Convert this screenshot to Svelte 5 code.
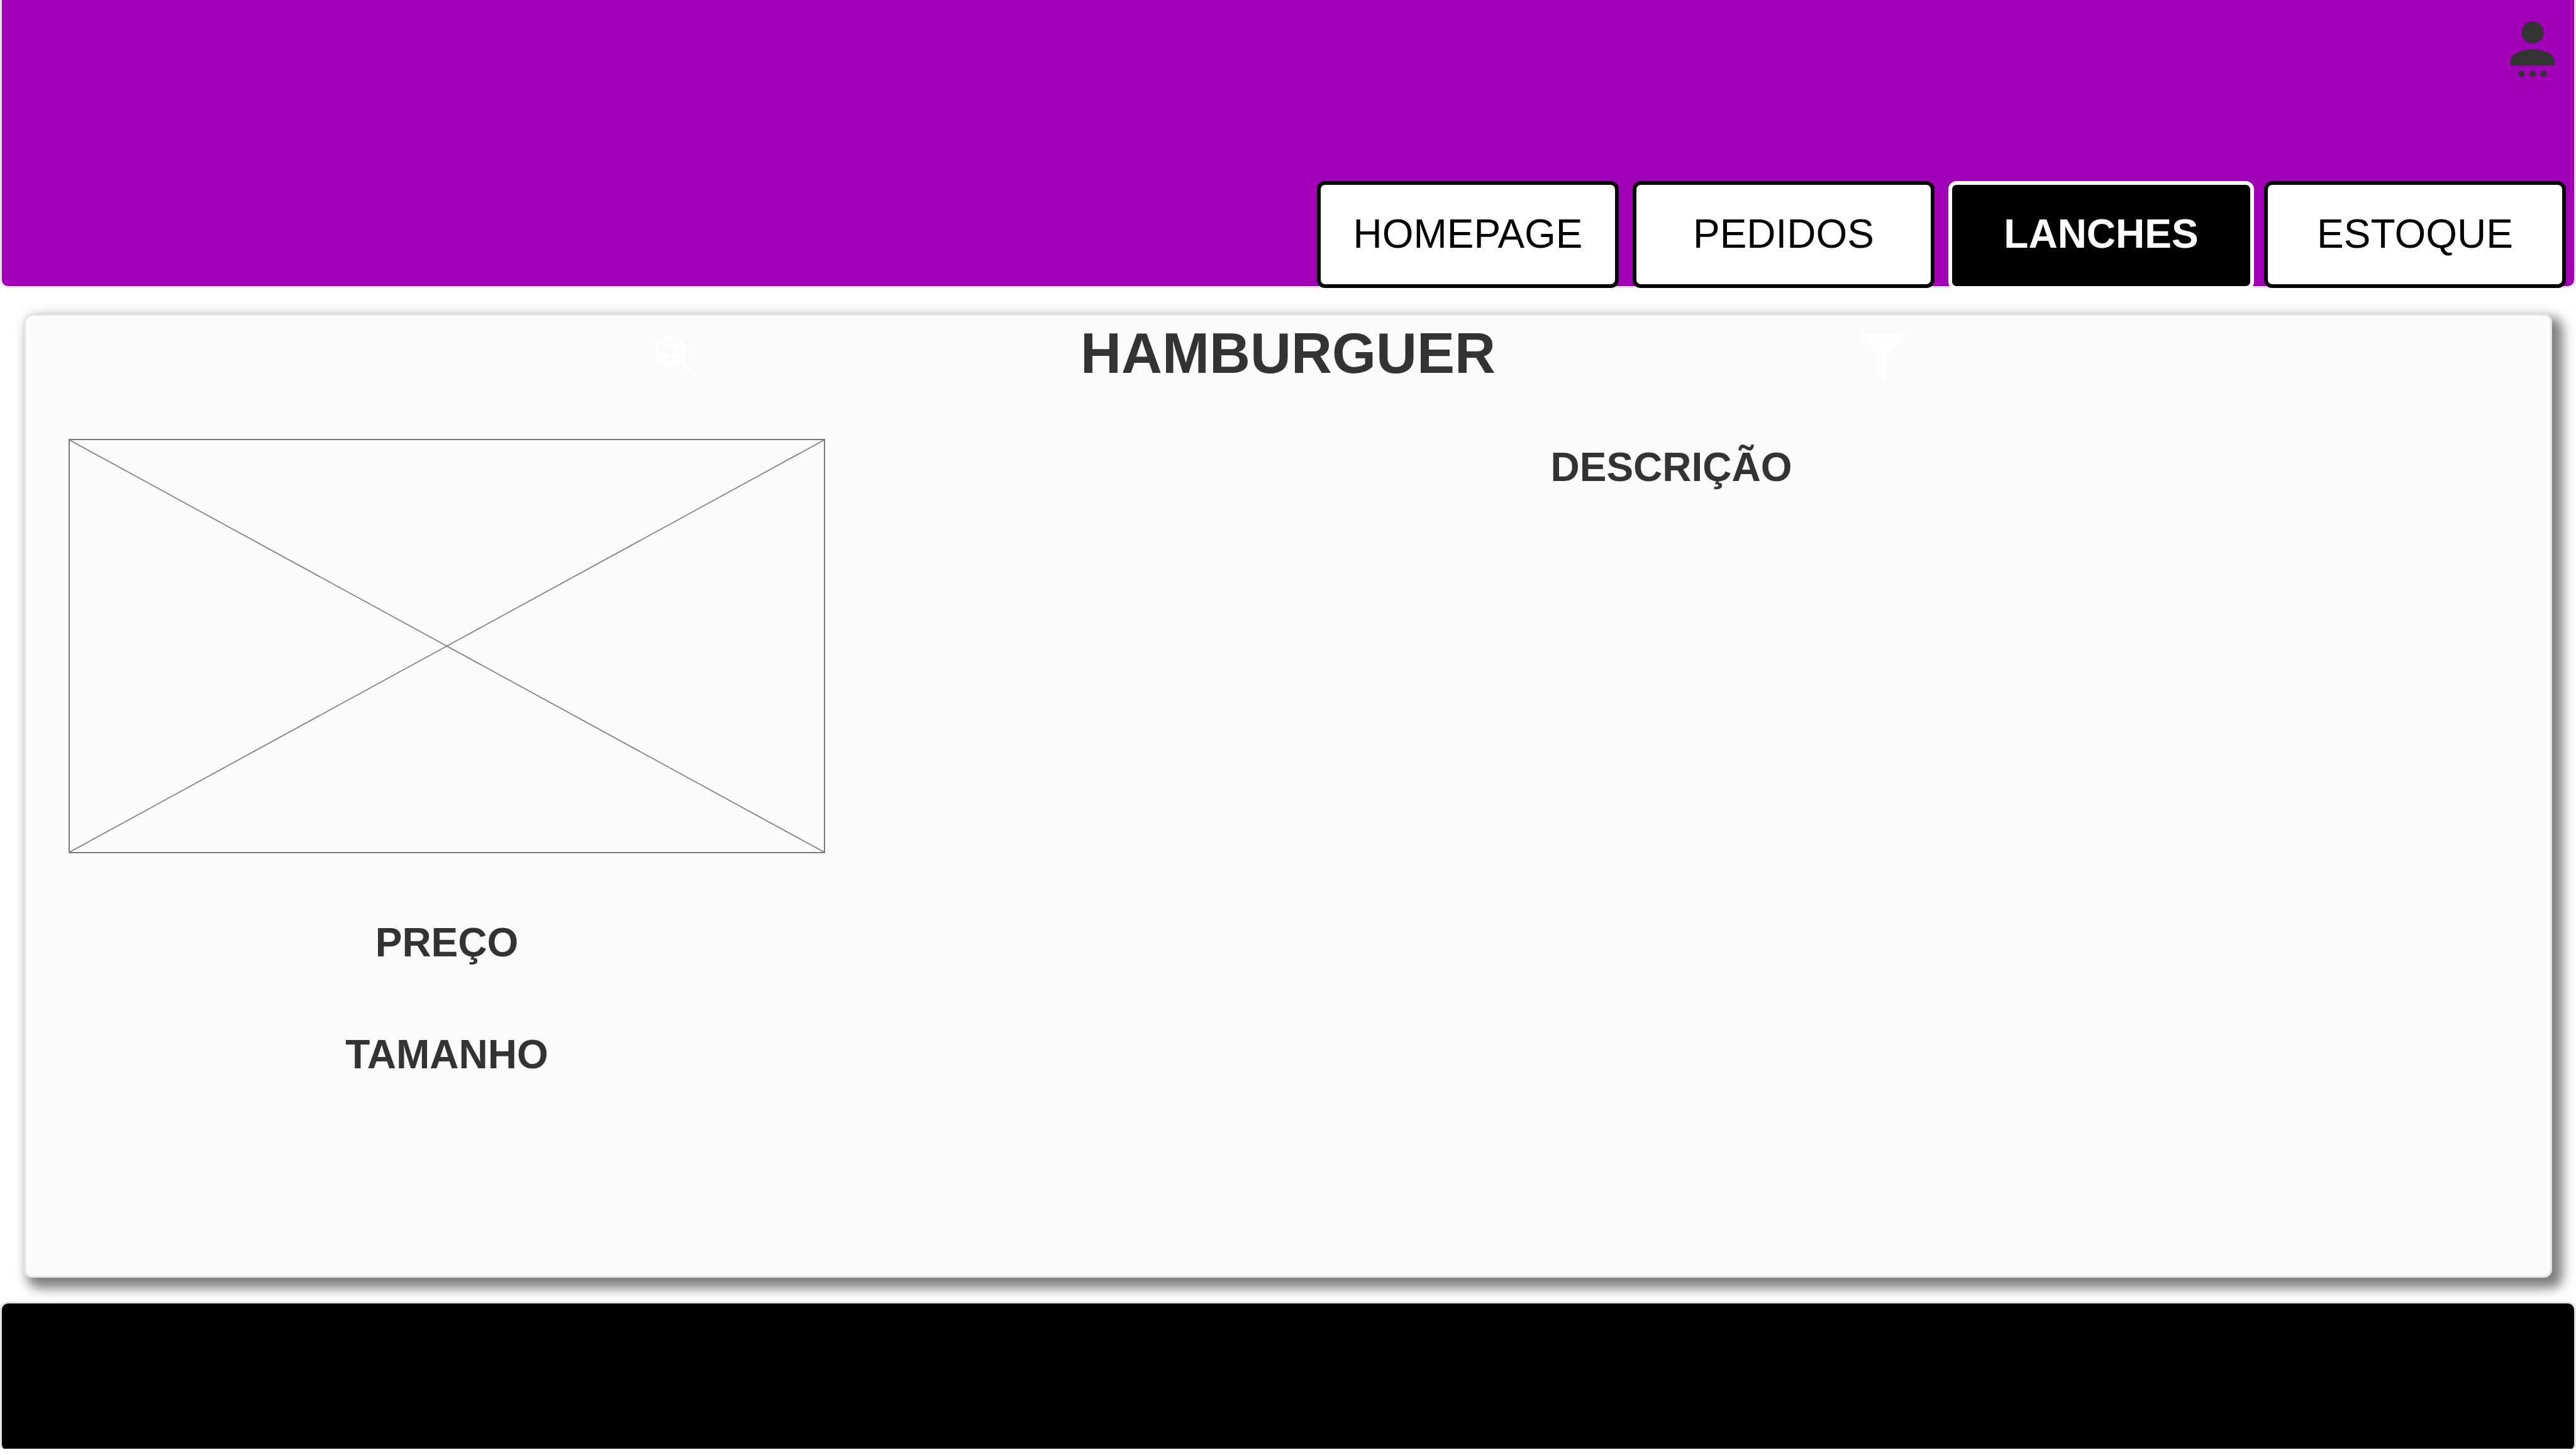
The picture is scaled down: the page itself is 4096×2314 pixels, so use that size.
<script>
  const tabs = [
    { label: 'HOMEPAGE', active: false },
    { label: 'PEDIDOS', active: false },
    { label: 'LANCHES', active: true },
    { label: 'ESTOQUE', active: false }
  ];
</script>

<div class="page">
  <header class="top">
    <button class="icon user" aria-label="Usuário">
      <svg viewBox="0 0 88 110" width="70" height="88" fill="#333">
        <circle cx="44" cy="22" r="22" />
        <path d="M0 88V78C0 66 20 55.500 44 55.500S88 66 88 78V88Z" />
        <path d="M16.500 99h11v11h-11zM38.500 99h11v11h-11zM60.500 99h11v11h-11z" />
      </svg>
    </button>
    <nav class="tabs">
      {#each tabs as tab}
        <button class="tab" class:active={tab.active}>{tab.label}</button>
      {/each}
    </nav>
  </header>

  <main class="card">
    <div class="heading">
      <button class="icon search" aria-label="Pesquisar">
        <svg viewBox="0 0 256 256" width="68" height="68" fill="none" stroke="#fff">
          <circle cx="96" cy="96" r="84" stroke-width="24" />
          <ellipse cx="96" cy="96" rx="34" ry="80" stroke-width="16" />
          <path d="M20 65H172M20 125H172" stroke-width="15" />
          <path d="M158 156L184 160L256 232L234 255L160 182Z" fill="#fff" stroke="none" />
        </svg>
      </button>
      <h1>HAMBURGUER</h1>
      <button class="icon filter" aria-label="Filtrar">
        <svg viewBox="0 0 262 304" width="70" height="81" fill="#fff">
          <path d="M0 0H262V29L161 131V304L102 246V131L0 29Z" />
        </svg>
      </button>
    </div>

    <div class="content">
      <section class="product">
        <svg class="picture" viewBox="0 0 1504 824" preserveAspectRatio="none" role="img" aria-label="Imagem do lanche">
          <path d="M0 0L1504 824M1504 0L0 824" />
        </svg>
        <h2>PREÇO</h2>
        <h2>TAMANHO</h2>
      </section>
      <section class="description">
        <h2>DESCRIÇÃO</h2>
      </section>
    </div>
  </main>

  <footer></footer>
</div>

<style>
  :global(body) {
    margin: 0;
    background: #fff;
  }

  .page {
    box-sizing: border-box;
    display: flex;
    flex-direction: column;
    height: calc(100vh - 10px);
    overflow: hidden;
    font-family: "Liberation Sans", Arial, sans-serif;
    color: #333;
  }

  button {
    margin: 0;
    padding: 0;
    font: inherit;
    cursor: pointer;
  }

  svg {
    display: block;
  }

  .icon {
    border: 0;
    background: none;
  }

  .top {
    box-sizing: border-box;
    flex: none;
    display: flex;
    flex-direction: column;
    justify-content: space-between;
    height: 458px;
    padding: 34px 13px 0;
    border: 3px solid #e4e4e4;
    border-top: 0;
    border-radius: 0 0 13px 13px;
    background: #a100b7;
  }

  .user {
    align-self: flex-end;
    margin-right: 18px;
  }

  .tabs {
    display: flex;
    align-items: flex-start;
    justify-content: flex-end;
    gap: 22px;
    height: 167px;
  }

  .tab {
    box-sizing: border-box;
    width: 480px;
    height: 170px;
    border: 6px solid #000;
    border-radius: 13px;
    background: #fff;
    color: #000;
    font-size: 64px;
    line-height: 72px;
    padding-bottom: 2px;
  }

  .tab.active {
    width: 486px;
    height: 173px;
    margin-right: -6px;
    padding-bottom: 5px;
    border-color: #fff;
    background: #000;
    color: #fff;
    font-weight: 700;
  }

  .card {
    box-sizing: border-box;
    flex: 1;
    margin: 41px 38px 38px;
    padding: 0 68px;
    border: 3px solid #e4e4e4;
    border-radius: 13px;
    background: #fbfbfb;
    box-shadow: 11px 11px 18px 6px rgba(0, 0, 0, 0.5);
  }

  .heading {
    display: grid;
    grid-template-columns: 1fr auto 1fr;
    align-items: start;
    padding-top: 10px;
  }

  .search {
    justify-self: end;
    margin: 21px 610px 0 0;
  }

  .filter {
    justify-self: start;
    margin: 18px 0 0 580px;
  }

  h1,
  h2 {
    margin: 0;
    text-align: center;
    font-weight: 700;
  }

  h1 {
    font-size: 90px;
    line-height: 100px;
  }

  h2 {
    font-size: 64px;
    line-height: 72px;
  }

  .content {
    display: grid;
    grid-template-columns: 1203px 1fr;
    padding-top: 86px;
  }

  .product {
    display: flex;
    flex-direction: column;
    gap: 106px;
  }

  .picture {
    box-sizing: border-box;
    width: 100%;
    height: 659px;
    border: 2px solid #797979;
    fill: none;
    stroke: #797979;
    stroke-width: 2;
  }

  .description {
    padding: 9px 0 0 16px;
  }

  footer {
    box-sizing: border-box;
    flex: none;
    height: 240px;
    margin-bottom: -6px;
    border: 3px solid #e4e4e4;
    border-radius: 13px;
    background: #000;
  }
</style>
